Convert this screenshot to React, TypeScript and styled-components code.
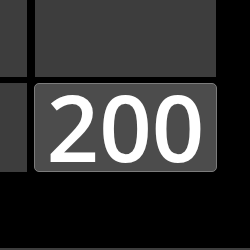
import styled, { createGlobalStyle } from "styled-components";

const GlobalStyle = createGlobalStyle`
  html, body {
    margin: 0;
    padding: 0;
    background: #000;
    overflow: hidden;
  }
  body {
    font-family: "Open Sans", "Noto Sans", sans-serif;
  }
`;

const Screen = styled.div`
  width: 250px;
  height: 250px;
  display: flex;
  flex-direction: column;
  background: #000;
`;

const Grid = styled.div`
  display: grid;
  grid-template-columns: 27px 183px;
  grid-template-rows: 77px 89px;
  column-gap: 7px;
  row-gap: 6px;
`;

const Tile = styled.div<{ $inset?: boolean }>`
  background: #3d3d3d;
  margin: ${(p) => (p.$inset ? "0 1px" : "0")};
`;

const Badge = styled.div`
  box-sizing: border-box;
  background: #4c4c4c;
  border: 1px solid #7c7c7c;
  border-radius: 5px;
  display: flex;
  align-items: center;
  justify-content: center;
  color: #fff;
  font-size: 92px;
  font-weight: 600;
  line-height: 1;
  padding-bottom: 2px;
`;

const Footer = styled.div`
  margin-top: auto;
  height: 2px;
  background: #3d3d3d;
`;

export default function App() {
  return (
    <>
      <GlobalStyle />
      <Screen>
        <Grid>
          <Tile />
          <Tile $inset />
          <Tile />
          <Badge>200</Badge>
        </Grid>
        <Footer />
      </Screen>
    </>
  );
}
